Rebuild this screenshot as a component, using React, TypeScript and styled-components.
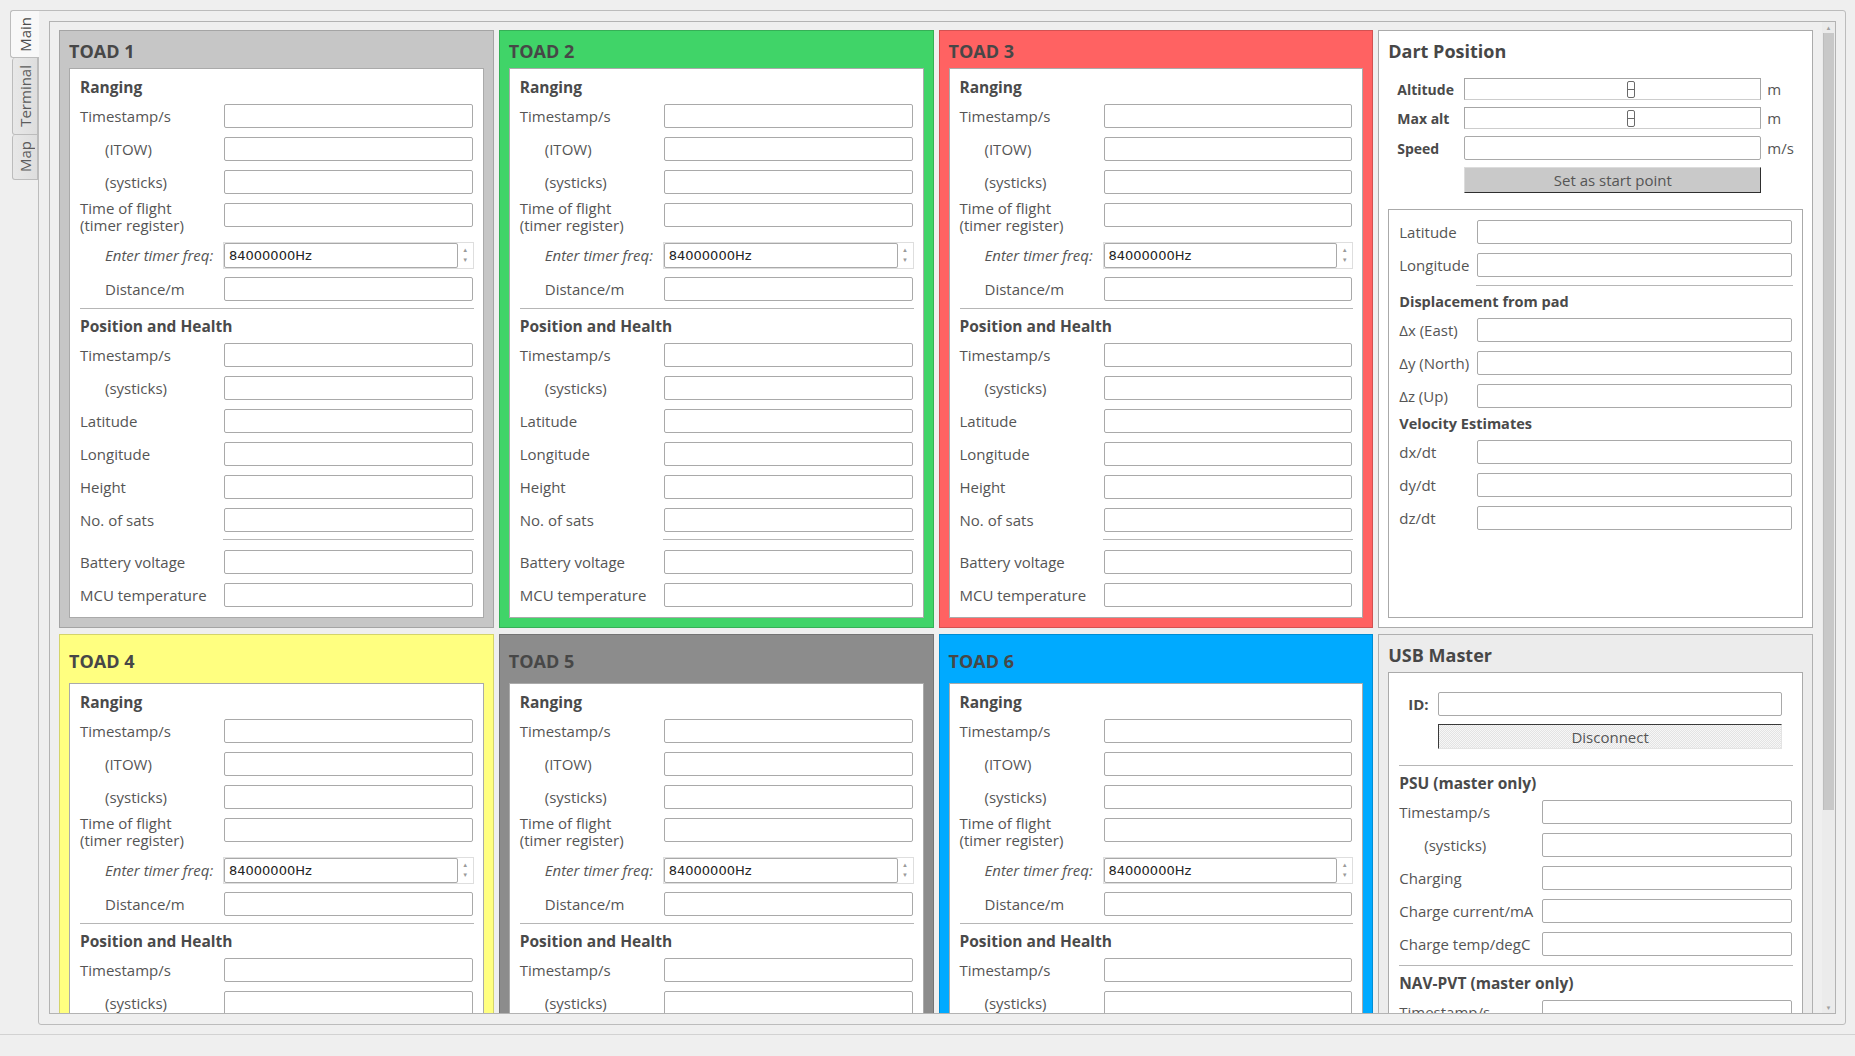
import React from 'react';
import styled, { createGlobalStyle } from 'styled-components';

const GlobalStyle = createGlobalStyle`
  html, body {
    margin: 0;
    padding: 0;
    background: #efefef;
    overflow: hidden;
  }
  body {
    font-family: "Open Sans", "Noto Sans", sans-serif;
    color: #555;
  }
  * {
    box-sizing: border-box;
  }
`;

const Window = styled.div`
  width: 1855px;
  height: 1056px;
  display: flex;
  flex-direction: column;
  background: #efefef;
`;

const Main = styled.div`
  height: 1034px;
  padding: 10px 9px 9px 10px;
  display: flex;
`;

const TabBar = styled.div`
  width: 28px;
  display: flex;
  flex-direction: column;
  align-items: flex-end;
  position: relative;
  z-index: 1;
`;

const Tab = styled.div<{ $active?: boolean; $h: number }>`
  height: ${(p) => p.$h}px;
  width: ${(p) => (p.$active ? 29 : 26)}px;
  margin-right: ${(p) => (p.$active ? -1 : 0)}px;
  border: 1px solid #bcbcbc;
  border-right: ${(p) => (p.$active ? 'none' : '1px solid #bcbcbc')};
  border-top: ${(p) => (p.$active ? '1px solid #bcbcbc' : 'none')};
  border-radius: 3px 0 0 3px;
  background: ${(p) => (p.$active ? '#f8f8f8' : 'linear-gradient(to right, #e8e8e8, #dedede)')};
  display: flex;
  align-items: center;
  justify-content: center;
  font-size: 15px;
  color: ${(p) => (p.$active ? '#4c4c4c' : '#5c5c5c')};
`;

const TabText = styled.span`
  writing-mode: vertical-rl;
  transform: rotate(180deg);
  white-space: nowrap;
  line-height: 1;
`;

const Pane = styled.div`
  flex: 1;
  min-width: 0;
  border: 1px solid #bcbcbc;
  border-radius: 0 3px 3px 3px;
  padding: 10px 9px 10px 10px;
  display: flex;
`;

const ScrollArea = styled.div`
  flex: 1;
  min-width: 0;
  min-height: 0;
  border: 1px solid #b3b3b3;
  display: flex;
  overflow: hidden;
`;

const Viewport = styled.div`
  flex: 1;
  min-width: 0;
  overflow: hidden;
`;

const ScrollBar = styled.div`
  width: 13px;
  display: flex;
  flex-direction: column;
  background: #ebebeb;
`;

const ArrowCell = styled.div`
  height: 11px;
  display: flex;
  align-items: center;
  justify-content: center;
  font-size: 6px;
  color: #a0a0a0;
`;

const Handle = styled.div`
  height: 777px;
  margin: 0 1px;
  background: #c8c8c8;
  border-left: 1px solid #bdbdbd;
`;

const Trough = styled.div`
  flex: 1;
`;

const Grid = styled.div`
  display: grid;
  grid-template-columns: repeat(4, minmax(0, 1fr));
  column-gap: 5px;
  row-gap: 6px;
  padding: 8px 9px;
`;

const Group = styled.section<{ $bg: string; $edge: string }>`
  display: flex;
  flex-direction: column;
  min-width: 0;
  background: ${(p) => p.$bg};
  border: 1px solid ${(p) => p.$edge};
`;

const GroupHeader = styled.div<{ $h: number }>`
  height: ${(p) => p.$h}px;
  padding: 3px 9px 0;
  display: flex;
  align-items: center;
  font-size: 18px;
  font-weight: 700;
  color: #474747;
  white-space: nowrap;
`;

const GroupBody = styled.div<{ $pad: string; $top?: number }>`
  flex: 1;
  margin: ${(p) => p.$top ?? 0}px 9px 9px;
  padding: ${(p) => p.$pad};
  background: #fff;
  border: 1px solid #aaaaaa;
  overflow: hidden;
`;

const Form = styled.div<{ $label: number; $top?: number }>`
  display: grid;
  grid-template-columns: ${(p) => p.$label}px minmax(0, 1fr);
  row-gap: 9px;
  align-items: center;
  margin-top: ${(p) => p.$top ?? 0}px;
`;

const Heading = styled.div<{ $h?: number; $size?: number }>`
  grid-column: 1 / -1;
  height: ${(p) => p.$h ?? 15}px;
  line-height: ${(p) => p.$h ?? 15}px;
  font-size: ${(p) => p.$size ?? 15.5}px;
  font-weight: 700;
  color: #4a4a4a;
  white-space: nowrap;
`;

const Label = styled.div<{ $indent?: boolean; $italic?: boolean; $tall?: boolean }>`
  font-size: 15px;
  line-height: 17px;
  color: #555;
  padding-left: ${(p) => (p.$indent ? 25 : 0)}px;
  font-style: ${(p) => (p.$italic ? 'italic' : 'normal')};
  white-space: nowrap;
  align-self: ${(p) => (p.$tall ? 'start' : 'center')};
  margin: ${(p) => (p.$tall ? '-3px 0 -1px' : '0')};
`;

const Field = styled.div<{ $top?: boolean }>`
  height: 24px;
  border: 1px solid #a9a9a9;
  border-radius: 2px;
  background: #fff;
  align-self: ${(p) => (p.$top ? 'start' : 'center')};
`;

const Rule = styled.div<{ $full?: boolean; $pull?: number }>`
  grid-column: ${(p) => (p.$full ? '1 / -1' : '2 / -1')};
  height: 1px;
  background: #b6b6b6;
  align-self: start;
  margin-top: ${(p) => p.$pull ?? 0}px;
  margin-left: ${(p) => (p.$full ? 0 : -1)}px;
  margin-right: -1px;
`;

const SpinFrame = styled.div`
  height: 27px;
  margin: 0 -1px -1px;
  border: 1px solid #dedede;
  display: flex;
  background: #f6f6f6;
`;

const SpinInput = styled.div`
  flex: 1;
  border: 1px solid #a9a9a9;
  border-radius: 2px;
  background: #fff;
  padding-left: 4px;
  display: flex;
  align-items: center;
  font-family: "DejaVu Sans", sans-serif;
  font-size: 13px;
  color: #222;
`;

const SpinArrows = styled.div`
  width: 15px;
  display: flex;
  flex-direction: column;
  justify-content: center;
  align-items: center;
  gap: 3px;
  font-size: 6px;
  line-height: 7px;
  color: #9a9a9a;
  background: #fff;
`;

const DartForm = styled.div`
  display: grid;
  grid-template-columns: 61px 297px auto;
  column-gap: 6px;
  row-gap: 7px;
  align-items: center;
  padding: 10px 0 0 18px;
`;

const DartLabel = styled.div`
  font-size: 14px;
  font-weight: 700;
  color: #4a4a4a;
  white-space: nowrap;
`;

const AltBar = styled.div`
  height: 22px;
  border: 1px solid #a6a6a6;
  border-bottom-color: #cdcdcd;
  background: #fff;
  display: flex;
  align-items: center;
  justify-content: center;
`;

const AltHandle = styled.div`
  width: 8px;
  height: 17px;
  margin-left: 36px;
  border: 1px solid #6a6a6a;
  border-radius: 2px;
  background: linear-gradient(#6a6a6a, #6a6a6a) center / 100% 1px no-repeat;
`;

const Unit = styled.div`
  font-size: 15px;
  color: #555;
`;

const StartButton = styled.div`
  grid-column: 2;
  height: 26px;
  background: #c9c9c9;
  border: 1px solid;
  border-color: #dcdcdc #2e2e2e #2e2e2e #dcdcdc;
  display: flex;
  align-items: center;
  justify-content: center;
  font-size: 15px;
  color: #555;
`;

const IdBlock = styled.div`
  display: grid;
  grid-template-columns: 30px minmax(0, 1fr);
  row-gap: 8px;
  align-items: center;
  padding: 0 10px 0 9px;
`;

const IdLabel = styled.div`
  font-size: 15px;
  font-weight: 700;
  color: #4a4a4a;
`;

const ToggleButton = styled.div`
  grid-column: 2;
  height: 25px;
  border: 1px solid;
  border-color: #3a3a3a #e4e4e4 #e4e4e4 #3a3a3a;
  background: repeating-conic-gradient(#e3e3e3 0 25%, #f7f7f7 0 50%) 0 0 / 2px 2px;
  display: flex;
  align-items: center;
  justify-content: center;
  font-size: 15px;
  color: #555;
`;

const StatusBar = styled.div`
  height: 22px;
  border-top: 1px solid #d2d2d2;
  background: #efefef;
`;

const Toad = ({ n, color, head }: { n: number; color: string; head: number }) => (
  <Group $bg={color} $edge="rgba(0,0,0,0.17)">
    <GroupHeader $h={head}>TOAD {n}</GroupHeader>
    <GroupBody $pad="11px 10px 10px">
      <Form $label={144}>
        <Heading>Ranging</Heading>
        <Label>Timestamp/s</Label>
        <Field />
        <Label $indent>(ITOW)</Label>
        <Field />
        <Label $indent>(systicks)</Label>
        <Field />
        <Label $tall>
          Time of flight
          <br />
          (timer register)
        </Label>
        <Field $top />
        <Label $indent $italic>
          Enter timer freq:
        </Label>
        <SpinFrame>
          <SpinInput>84000000Hz</SpinInput>
          <SpinArrows>
            <span>▲</span>
            <span>▼</span>
          </SpinArrows>
        </SpinFrame>
        <Label $indent>Distance/m</Label>
        <Field />
        <Rule $full $pull={-2} />
        <Heading>Position and Health</Heading>
        <Label>Timestamp/s</Label>
        <Field />
        <Label $indent>(systicks)</Label>
        <Field />
        <Label>Latitude</Label>
        <Field />
        <Label>Longitude</Label>
        <Field />
        <Label>Height</Label>
        <Field />
        <Label>No. of sats</Label>
        <Field />
        <Rule $pull={-2} />
        <Label>Battery voltage</Label>
        <Field />
        <Label>MCU temperature</Label>
        <Field />
      </Form>
    </GroupBody>
  </Group>
);

const DartPosition = () => (
  <Group $bg="#ffffff" $edge="#ababab">
    <GroupHeader $h={37}>Dart Position</GroupHeader>
    <DartForm>
      <DartLabel>Altitude</DartLabel>
      <AltBar>
        <AltHandle />
      </AltBar>
      <Unit>m</Unit>
      <DartLabel>Max alt</DartLabel>
      <AltBar>
        <AltHandle />
      </AltBar>
      <Unit>m</Unit>
      <DartLabel>Speed</DartLabel>
      <Field />
      <Unit>m/s</Unit>
      <StartButton>Set as start point</StartButton>
    </DartForm>
    <GroupBody $pad="10px 10px" $top={16}>
      <Form $label={78}>
        <Label>Latitude</Label>
        <Field />
        <Label>Longitude</Label>
        <Field />
        <Rule $pull={-1} />
        <Heading $h={14} $size={14.5}>
          Displacement from pad
        </Heading>
        <Label>Δx (East)</Label>
        <Field />
        <Label>Δy (North)</Label>
        <Field />
        <Label>Δz (Up)</Label>
        <Field />
        <Heading $h={14} $size={14.5}>
          Velocity Estimates
        </Heading>
        <Label>dx/dt</Label>
        <Field />
        <Label>dy/dt</Label>
        <Field />
        <Label>dz/dt</Label>
        <Field />
      </Form>
    </GroupBody>
  </Group>
);

const UsbMaster = () => (
  <Group $bg="#ececec" $edge="#b0b0b0">
    <GroupHeader $h={37}>USB Master</GroupHeader>
    <GroupBody $pad="19px 10px 10px">
      <IdBlock>
        <IdLabel>ID:</IdLabel>
        <Field />
        <ToggleButton>Disconnect</ToggleButton>
      </IdBlock>
      <Form $label={143} $top={16}>
        <Rule $full />
        <Heading $h={16}>PSU (master only)</Heading>
        <Label>Timestamp/s</Label>
        <Field />
        <Label $indent>(systicks)</Label>
        <Field />
        <Label>Charging</Label>
        <Field />
        <Label>Charge current/mA</Label>
        <Field />
        <Label>Charge temp/degC</Label>
        <Field />
        <Rule $full />
        <Heading $h={16}>NAV-PVT (master only)</Heading>
        <Label>Timestamp/s</Label>
        <Field />
        <Label $indent>(ITOW)</Label>
        <Field />
      </Form>
    </GroupBody>
  </Group>
);

const App = (): JSX.Element => (
  <Window>
    <GlobalStyle />
    <Main>
      <TabBar>
        <Tab $active $h={48}>
          <TabText>Main</TabText>
        </Tab>
        <Tab $h={77}>
          <TabText>Terminal</TabText>
        </Tab>
        <Tab $h={45}>
          <TabText>Map</TabText>
        </Tab>
      </TabBar>
      <Pane>
        <ScrollArea>
          <Viewport>
            <Grid>
              <Toad n={1} color="#c6c6c6" head={37} />
              <Toad n={2} color="#40d468" head={37} />
              <Toad n={3} color="#ff6262" head={37} />
              <DartPosition />
              <Toad n={4} color="#ffff80" head={48} />
              <Toad n={5} color="#8c8c8c" head={48} />
              <Toad n={6} color="#00aaff" head={48} />
              <UsbMaster />
            </Grid>
          </Viewport>
          <ScrollBar>
            <ArrowCell>▲</ArrowCell>
            <Handle />
            <Trough />
            <ArrowCell>▼</ArrowCell>
          </ScrollBar>
        </ScrollArea>
      </Pane>
    </Main>
    <StatusBar />
  </Window>
);

export default App;
